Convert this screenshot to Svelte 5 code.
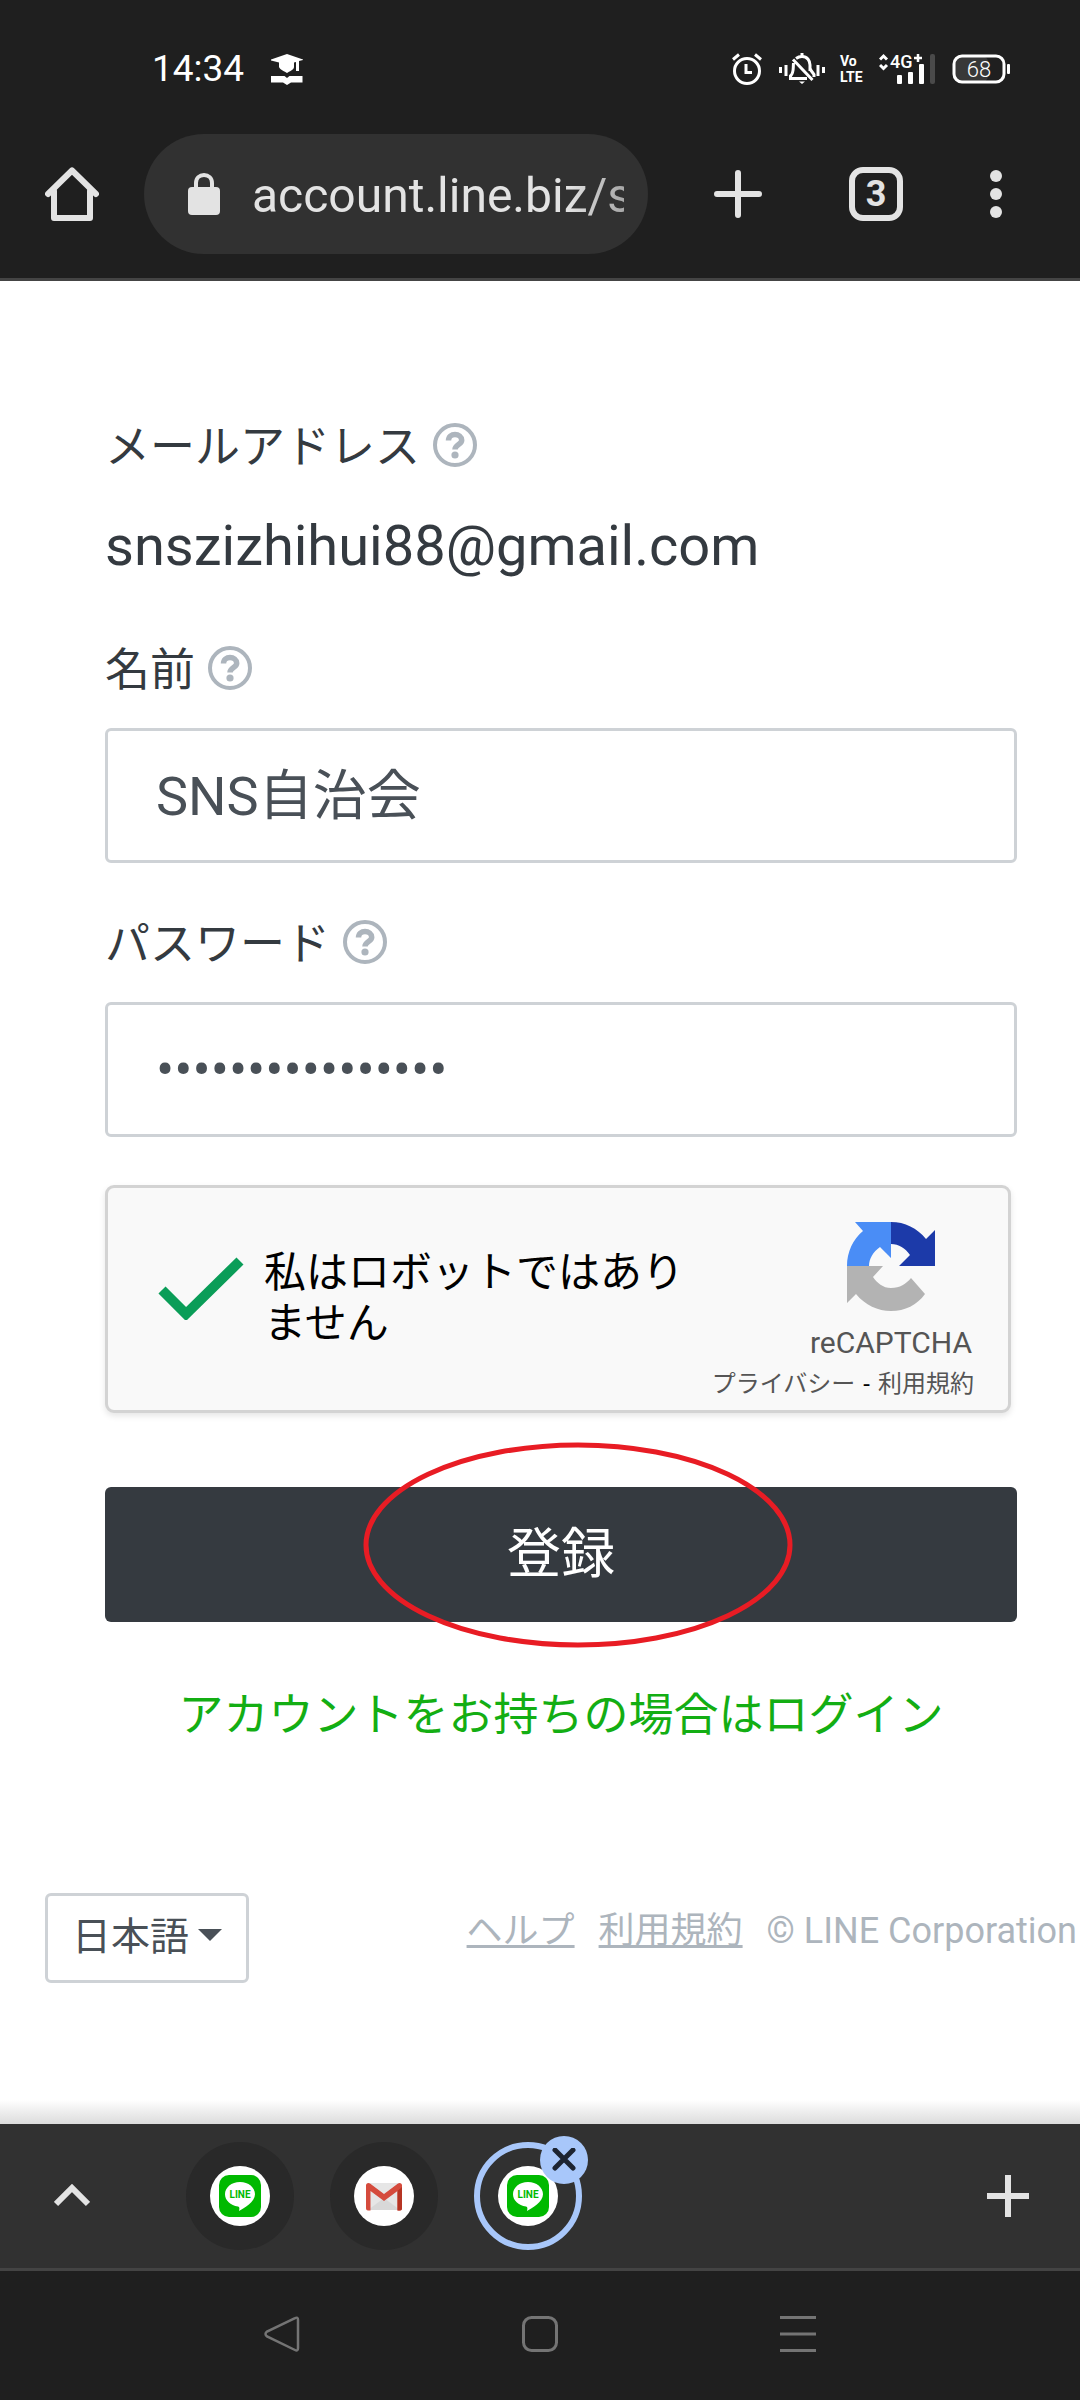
<script>
  let name = $state('SNS自治会');
  let password = $state('abcdefgh12345678');
  let url = $state('account.line.biz/s');
</script>

{#snippet help(label)}
  <button class="help" type="button" aria-label={label}>
    <svg viewBox="0 0 44 44" width="44" height="44">
      <circle cx="22" cy="22" r="20" fill="none" stroke="#adb5bd" stroke-width="4" />
      <path d="M15.5 17.5C15.5 13.5 18.5 11.5 22 11.5S28.7 13.8 28.7 17.2C28.7 21.5 22 21.5 22 26.5" fill="none" stroke="#adb5bd" stroke-width="5.500" />
      <circle cx="22" cy="32" r="3.6" fill="#adb5bd" />
    </svg>
  </button>
{/snippet}

{#snippet lineLogo()}
  <svg viewBox="0 0 60 60" width="60" height="60">
    <circle cx="30" cy="30" r="30" fill="#fff" />
    <rect x="9" y="9" width="42" height="42" rx="10" fill="#00b900" />
    <path d="M30 16C21.500 16 15 21.500 15 28.300C15 34.500 20.500 39.500 28 40.500C29.800 41 29.500 42.500 29 45C34 42.500 45 36 45 28.300C45 21.500 38.500 16 30 16Z" fill="#fff" />
    <text x="30" y="32" text-anchor="middle" class="line-word">LINE</text>
  </svg>
{/snippet}

<div class="phone">
  <header>
    <div class="status">
      <div class="side">
        <time>14:34</time>
        <svg viewBox="0 0 32 31" width="32" height="31" fill="#fff">
          <path d="M16 0L0 5.500V6.500L8 8.500V13C9 16 14 17.500 16 19C18 17.500 23 16 23 13V8.500L25 8V17H28V7L32 6V5.500Z" />
          <path d="M0 22H13.500L16 24L18.500 22H31.500V28.500H20L16 31L12 28.500H0Z" />
        </svg>
      </div>
      <div class="side">
        <svg viewBox="0 0 30 32" width="30" height="32" fill="none" stroke="#fff" stroke-width="3">
          <circle cx="15" cy="18" r="12.500" />
          <path d="M14 11V19.500H20" />
          <path d="M1 6.500L7 1.500M29 6.500L23 1.500" />
        </svg>
        <svg class="bell" viewBox="0 0 46 32" width="46" height="32" fill="none" stroke="#fff" stroke-width="3">
          <path d="M1.500 14V20M7 12V23M39 12V23M44.500 14V20" />
          <path d="M17 5.500C19 4 21 3.500 23 3.500C28.500 3.500 31 8 31 12V18M14.500 10C14 16 15 20 11.500 23V25.500H28" />
          <path d="M14 6.500L33.500 27M31 16L35 21.500V24" />
          <path d="M23 0V4" />
          <path d="M20 28.500H26L23 31Z" fill="#fff" stroke="none" />
        </svg>
        <div class="volte"><span>Vo</span><span>LTE</span></div>
        <svg class="signal" viewBox="0 -6 56 44" width="56" height="44">
          <path d="M1 6.500L4.500 3L8 6.500M1 12L4.500 15.500L8 12" fill="none" stroke="#fff" stroke-width="3" />
          <text x="11" y="15" class="net">4G</text>
          <path d="M35 5H43M39 1V9" stroke="#fff" stroke-width="2.500" />
          <rect x="18" y="22" width="5" height="9" rx="1" fill="#fff" />
          <rect x="29" y="19" width="5" height="12" rx="1" fill="#fff" />
          <rect x="40" y="11" width="5" height="20" rx="1" fill="#fff" />
          <rect x="51" y="1" width="5" height="30" rx="2" fill="#4a4a4a" />
        </svg>
        <svg class="battery" viewBox="0 0 59 30" width="59" height="30">
          <rect x="2" y="2" width="34" height="26" rx="6" fill="#383838" />
          <rect x="2" y="2" width="50" height="26" rx="8" fill="none" stroke="#fff" stroke-width="3" />
          <rect x="55" y="10" width="3" height="10" rx="1" fill="#fff" />
          <text x="27" y="23" text-anchor="middle" class="percent">68</text>
        </svg>
      </div>
    </div>

    <div class="toolbar">
      <button class="icon" type="button" aria-label="ホーム">
        <svg viewBox="0 0 54 54" width="54" height="54" fill="none" stroke="#e3e3e3" stroke-width="6" stroke-linecap="round" stroke-linejoin="round">
          <path d="M3 27L27 3.500L51 27" />
          <path d="M9 24V51H45V24" />
        </svg>
      </button>
      <div class="address">
        <svg viewBox="0 0 32 42" width="32" height="42">
          <rect x="0" y="14" width="32" height="28" rx="4" fill="#e3e3e3" />
          <path d="M8 16V10C8 5 11.500 2 16 2S24 5 24 10V16" fill="none" stroke="#e3e3e3" stroke-width="4" />
        </svg>
        <input aria-label="アドレス" bind:value={url} />
      </div>
      <div class="actions">
        <button class="icon" type="button" aria-label="新しいタブ">
          <svg viewBox="0 0 48 48" width="48" height="48" stroke="#e3e3e3" stroke-width="6" stroke-linecap="round">
            <path d="M3 24H45M24 3V45" />
          </svg>
        </button>
        <button class="icon tabs" type="button" aria-label="タブ 3">3</button>
        <button class="icon" type="button" aria-label="メニュー">
          <svg viewBox="0 0 12 48" width="12" height="48" fill="#e3e3e3">
            <circle cx="6" cy="6" r="6" /><circle cx="6" cy="24" r="6" /><circle cx="6" cy="42" r="6" />
          </svg>
        </button>
      </div>
    </div>
  </header>

  <main>
    <form onsubmit={(e) => e.preventDefault()}>
      <div class="label-row"><span>メールアドレス</span>{@render help('メールアドレスについて')}</div>
      <p class="email">snszizhihui88@gmail.com</p>

      <div class="label-row"><label for="name">名前</label>{@render help('名前について')}</div>
      <input class="field name" id="name" type="text" bind:value={name} />

      <div class="label-row"><label for="pass">パスワード</label>{@render help('パスワードについて')}</div>
      <input class="field" id="pass" type="password" bind:value={password} />

      <div class="captcha">
        <label class="robot">
          <input type="checkbox" checked />
          <svg viewBox="0 0 86 64" width="86" height="64">
            <path d="M4 34L28 58L82 5" fill="none" stroke="#0a9d58" stroke-width="10" />
          </svg>
          <span>私はロボットではありません</span>
        </label>
        <div class="brand">
          <svg viewBox="0 0 88 90" width="88" height="90">
            <path d="M44 0C58 0 70 6 79 17L88 8V44H52L63 33C58 26 52 22 44 22Z" fill="#1c3aa9" />
            <path d="M44 0H8L16 9C6 17 0 30 0 44H22C22 37 26 30 33 25L44 36Z" fill="#4a8df6" />
            <path d="M0 44V81L9 72C18 83 31 89 44 89C58 89 70 83 78 72L64 56C59 62 53 66 44 66C36 66 30 61 26 55L36 44Z" fill="#b3b3b3" />
          </svg>
          <strong>reCAPTCHA</strong>
          <small><a href="#privacy">プライバシー</a><span>-</span><a href="#terms">利用規約</a></small>
        </div>
      </div>

      <div class="submit">
        <button type="submit">登録</button>
        <svg class="ring" viewBox="0 0 430 206" width="430" height="206">
          <ellipse cx="215" cy="103" rx="212" ry="100" fill="none" stroke="#e81c24" stroke-width="5" />
        </svg>
      </div>
      <a class="login" href="#login">アカウントをお持ちの場合はログイン</a>
    </form>

    <footer>
      <div class="lang">
        <select aria-label="言語"><option>日本語</option></select>
        <svg viewBox="0 0 24 12" width="24" height="12"><path d="M0 0H24L12 12Z" fill="#495057" /></svg>
      </div>
      <div class="legal">
        <a href="#help">ヘルプ</a>
        <a href="#terms">利用規約</a>
        <span>© LINE Corporation</span>
      </div>
    </footer>
  </main>

  <nav class="tabstrip">
    <button class="icon expand" type="button" aria-label="展開">
      <svg viewBox="0 0 36 24" width="36" height="24"><path d="M2 20L18 4L34 20" fill="none" stroke="#e3e3e3" stroke-width="6" /></svg>
    </button>
    <div class="group">
      <button class="tab" type="button" aria-label="LINE">{@render lineLogo()}</button>
      <button class="tab" type="button" aria-label="Gmail">
        <svg viewBox="0 0 60 60" width="60" height="60">
          <circle cx="30" cy="30" r="30" fill="#fff" />
          <rect x="14" y="17" width="32" height="27" fill="#e6e6e6" />
          <path d="M14 44L30 32L46 44Z" fill="#d8d8d8" />
          <path d="M12 19.500V42.500Q12 44.500 14 44.500H16.500V25L30 35L43.500 25V44.500H46Q48 44.500 48 42.500V19.500Q48 17 45.500 17L44 17.500L30 28L16 17.500L14.500 17Q12 17 12 19.500Z" fill="#d54b3d" />
          <path d="M43.500 25L48 21V42.500Q48 44.500 46 44.500H43.500Z" fill="#b63524" />
        </svg>
      </button>
      <div class="current">
        <button class="tab active" type="button" aria-label="LINE">{@render lineLogo()}</button>
        <button class="close" type="button" aria-label="閉じる">
          <svg viewBox="0 0 24 24" width="24" height="24"><path d="M3 2L21 20M21 2L3 20" stroke="#1d2431" stroke-width="5" stroke-linecap="round" /></svg>
        </button>
      </div>
    </div>
    <button class="icon" type="button" aria-label="タブを追加">
      <svg viewBox="0 0 42 42" width="42" height="42" stroke="#e3e3e3" stroke-width="6"><path d="M0 21H42M21 0V42" /></svg>
    </button>
  </nav>

  <nav class="system">
    <button class="icon" type="button" aria-label="戻る">
      <svg viewBox="0 0 36 36" width="36" height="36" fill="none" stroke="#747474" stroke-width="2.500"><path d="M31 2.200Q34 .5 34 4V32Q34 35.500 31 34L3 20.500Q0 18 3 15.500Z" /></svg>
    </button>
    <button class="icon" type="button" aria-label="ホーム画面">
      <svg viewBox="0 0 36 36" width="36" height="36" fill="none" stroke="#747474" stroke-width="3"><rect x="1.500" y="1.500" width="33" height="33" rx="8" /></svg>
    </button>
    <button class="icon" type="button" aria-label="履歴">
      <svg viewBox="0 0 36 36" width="36" height="36" stroke="#747474" stroke-width="3"><path d="M0 1.500H36M0 18H36M0 34.500H36" /></svg>
    </button>
  </nav>
</div>

<style>
  :global(body) { background: #fff; }
  .phone {
    min-height: 100vh;
    display: flex;
    flex-direction: column;
    font-family: Roboto, "Noto Sans CJK JP", sans-serif;
    color: #343a40;
  }
  .phone :global(*) { box-sizing: border-box; }
  svg { display: block; flex: none; }
  button, input, select { font: inherit; color: inherit; }
  button { border: 0; padding: 0; background: none; }
  a { color: inherit; }

  header { background: #1f1f1f; border-bottom: 3px solid #444; }
  .status {
    display: flex;
    justify-content: space-between;
    align-items: center;
    height: 134px;
    padding: 4px 69px 0 152px;
    color: #fff;
  }
  .side { display: flex; align-items: center; }
  .side time { font-size: 37px; line-height: 44px; margin-right: 27px; }
  .bell { margin-left: 17px; }
  .volte {
    display: flex;
    flex-direction: column;
    margin-left: 15px;
    width: 26px;
    font-family: "Liberation Sans Narrow", Roboto, sans-serif;
    font-size: 14px;
    line-height: 16px;
    font-weight: 700;
  }
  .signal { margin-left: 13px; }
  .battery { margin-left: 17px; }
  .net { font: 500 18px Roboto, sans-serif; fill: #fff; }
  .percent { font: 300 22px Roboto, sans-serif; fill: #fff; }

  .toolbar {
    display: flex;
    align-items: center;
    height: 144px;
    padding: 0 78px 24px 45px;
  }
  .address {
    display: flex;
    align-items: center;
    flex: 1;
    min-width: 0;
    height: 120px;
    margin-left: 45px;
    padding: 0 24px 0 44px;
    border-radius: 60px;
    background: #313131;
  }
  .address input {
    flex: 1;
    min-width: 0;
    margin-left: 32px;
    padding: 4px 0 0;
    border: 0;
    background: none;
    color: #e3e3e3;
    font-size: 48px;
    line-height: 60px;
    outline: 0;
    mask-image: linear-gradient(to right, #000 85%, #000a);
  }
  .actions { display: flex; align-items: center; gap: 87px; margin-left: 66px; }
  .tabs {
    width: 54px;
    height: 54px;
    border: 6px solid #e3e3e3;
    border-radius: 14px;
    color: #e3e3e3;
    font-size: 36px;
    line-height: 42px;
    font-weight: 700;
  }

  main { flex: 1; display: flex; flex-direction: column; background: linear-gradient(#fff, #dcdcdc) bottom / 100% 24px no-repeat #fff; }
  form { display: flex; flex-direction: column; padding: 136px 63px 0 105px; }
  .label-row { display: flex; align-items: center; gap: 13px; height: 56px; font-size: 45px; line-height: 56px; }
  .label-row span, .label-row label { padding-top: 5px; }
  .email { margin: 37px 0 58px; font-size: 56px; line-height: 72px; }
  .field {
    width: 100%;
    height: 135px;
    margin: 32px 0 48px;
    padding: 0 48px;
    border: 3px solid #ced2d6;
    border-radius: 6px;
    background: #fff;
    color: #495057;
    font-size: 54px;
    outline: 0;
  }
  .name { padding-bottom: 9px; margin-bottom: 51px; }
  .captcha {
    display: flex;
    justify-content: space-between;
    height: 228px;
    margin-right: 6px;
    padding: 0 34px 0 50px;
    border: 3px solid #d3d3d3;
    border-radius: 9px;
    background: #f9f9f9;
    box-shadow: 0 3px 6px #0000001a;
    color: #000;
  }
  .robot { display: flex; align-items: center; gap: 20px; flex: 1; padding-bottom: 2px; font-size: 42px; line-height: 51px; }
  .robot input { position: absolute; opacity: 0; }
  .robot svg { margin-bottom: 20px; }
  .robot span { width: 422px; }
  .brand { display: flex; flex-direction: column; align-items: flex-end; padding-top: 34px; }
  .brand svg { margin-right: 39px; }
  .brand strong { margin: 13px 2px 0 0; font-size: 30px; line-height: 36px; font-weight: 400; color: #555; }
  .brand small { font-size: 24px; line-height: 46px; white-space: nowrap; }
  .brand small span { margin: 0 8px; }
  .brand a { color: #555; text-decoration: none; }
  .submit { position: relative; margin-top: 74px; }
  .submit button { display: block; width: 100%; height: 135px; padding-bottom: 10px; border-radius: 6px; background: #353a40; color: #fff; font-size: 54px; }
  .ring { position: absolute; left: calc(50% - 198px); top: -45px; pointer-events: none; }
  .login { align-self: center; margin-top: 64px; font-size: 45px; line-height: 60px; color: #13ae13; text-decoration: none; }

  footer { display: flex; justify-content: space-between; align-items: flex-start; margin-top: 147px; padding: 0 3px 0 45px; }
  .lang { position: relative; display: flex; align-items: center; }
  .lang select { appearance: none; width: 204px; height: 90px; padding: 0 24px 3px; border: 3px solid #ced2d6; border-radius: 6px; background: #fff; color: #495057; font-size: 39px; }
  .lang svg { position: absolute; right: 27px; top: 36px; pointer-events: none; }
  .legal { display: flex; gap: 24px; padding-top: 12px; font-size: 36px; line-height: 52px; color: #adb5bd; white-space: nowrap; }

  .tabstrip {
    display: flex;
    align-items: center;
    height: 147px;
    padding: 0 51px 0 54px;
    border-bottom: 3px solid #444;
    background: #313131;
  }
  .group { display: flex; gap: 36px; flex: 1; margin-left: 96px; }
  .tab { display: grid; place-items: center; width: 108px; height: 108px; border-radius: 50%; background: #292929; }
  .tab.active { border: 6px solid #a8c7fa; background: none; }
  .current { position: relative; }
  .close { position: absolute; top: -6px; right: -6px; display: grid; place-items: center; width: 48px; height: 48px; border-radius: 50%; background: #a8c7fa; }
  .line-word { font: 700 10px Roboto, sans-serif; fill: #00b900; }

  .system { display: flex; justify-content: space-between; height: 129px; padding: 45px 264px 48px; background: #1f1f1f; }
</style>
